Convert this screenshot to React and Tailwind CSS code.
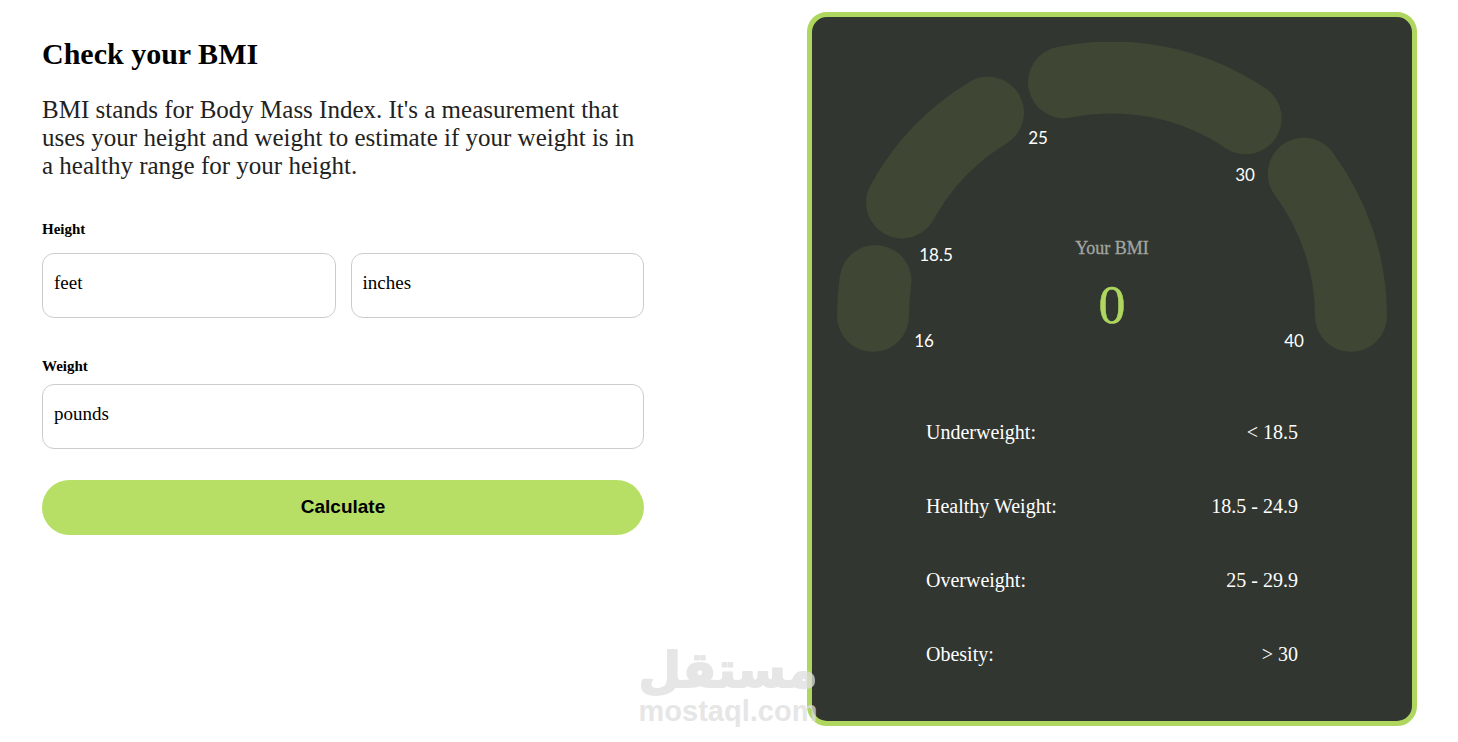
import { useState } from "react";

const ranges = [
  { label: "Underweight:", value: "< 18.5" },
  { label: "Healthy Weight:", value: "18.5 - 24.9" },
  { label: "Overweight:", value: "25 - 29.9" },
  { label: "Obesity:", value: "> 30" },
];

const arcs = [
  { from: 16, to: 18.5, d: "M36 274 A239 239 0 0 1 38.5 239" },
  { from: 18.5, to: 25, d: "M65 160.5 A239 239 0 0 1 151 70.7" },
  { from: 25, to: 30, d: "M227 40.3 A239 239 0 0 1 408.7 76.3" },
  { from: 30, to: Infinity, d: "M466.7 131.7 A239 239 0 0 1 514 274" },
];

const marks = [
  { x: 87, y: 305, text: "16" },
  { x: 99, y: 219, text: "18.5" },
  { x: 201, y: 102, text: "25" },
  { x: 408, y: 139, text: "30" },
  { x: 457, y: 305, text: "40" },
];

const inputClass =
  "w-full min-w-0 h-[65px] rounded-xl border border-[#ccc] bg-white px-[11px] pb-1.5 text-[19px] text-black placeholder:text-black placeholder:opacity-100 focus:outline-none focus:border-[#afd65f]";

const Gauge = ({ bmi }) => (
  <svg viewBox="0 0 550 328" className="w-full" role="img" aria-label="BMI gauge">
    {arcs.map((arc) => (
      <path
        key={arc.from}
        d={arc.d}
        fill="none"
        strokeWidth="72"
        strokeLinecap="round"
        className={
          bmi >= arc.from && bmi < arc.to ? "stroke-[#b7df65]" : "stroke-[#3f4634]"
        }
      />
    ))}
    {marks.map((mark) => (
      <text
        key={mark.text}
        x={mark.x}
        y={mark.y}
        textAnchor="middle"
        className="fill-white font-['Lato',sans-serif] text-[17px]"
      >
        {mark.text}
      </text>
    ))}
    <text
      x="275"
      y="212"
      textAnchor="middle"
      className="fill-[#a3a5a2] stroke-[#a3a5a2] stroke-[0.3px] font-['Liberation_Serif',serif] text-[18px]"
    >
      Your BMI
    </text>
    <text
      x="275"
      y="281"
      textAnchor="middle"
      className="fill-[#afd65f] stroke-[#afd65f] stroke-[0.5px] font-['Liberation_Serif',serif] text-[54px]"
    >
      {bmi}
    </text>
  </svg>
);

const Watermark = () => (
  <svg
    viewBox="0 0 180 100"
    className="pointer-events-none absolute bottom-0 left-[639px] w-[180px] overflow-visible fill-[#dedede] stroke-[#dedede] opacity-75"
    role="img"
    aria-label="mostaql.com"
  >
    <text
      x="89"
      y="45"
      textAnchor="middle"
      strokeWidth="2"
      strokeLinejoin="round"
      className="font-['DejaVu_Sans',sans-serif] text-[49px] font-bold"
    >
      مستقل
    </text>
    <text
      x="89"
      y="79"
      textAnchor="middle"
      stroke="none"
      className="font-['Liberation_Sans',sans-serif] text-[29px] font-bold"
    >
      mostaql.com
    </text>
  </svg>
);

const App = () => {
  const [feet, setFeet] = useState("");
  const [inches, setInches] = useState("");
  const [pounds, setPounds] = useState("");
  const [bmi, setBmi] = useState(0);

  const handleSubmit = (e) => {
    e.preventDefault();
    const height = Number(feet) * 12 + Number(inches);
    const weight = Number(pounds);
    if (!height || !weight) {
      setBmi(0);
      return;
    }
    // Imperial formula: 703 * lb / in^2
    setBmi(Math.round((703 * weight * 10) / (height * height)) / 10);
  };

  return (
    <main className="relative flex min-h-screen items-start justify-between bg-white pt-3 pr-[41px] pb-4 pl-[42px] font-['Liberation_Serif',serif] text-black">
      <section className="w-[44%] max-w-[602px] pt-6">
        <h1 className="text-[30px] leading-9 font-bold">Check your BMI</h1>
        <p className="mt-6 text-[25px] leading-7 text-[#222]">
          BMI stands for Body Mass Index. It's a measurement that uses your
          height and weight to estimate if your weight is in a healthy range for
          your height.
        </p>

        <form onSubmit={handleSubmit} className="mt-[39px]">
          <fieldset>
            <legend className="text-[15px] leading-5 font-bold">Height</legend>
            <div className="mt-3.5 flex gap-[15px]">
              <input
                className={inputClass}
                type="text"
                inputMode="numeric"
                placeholder="feet"
                aria-label="Height, feet"
                value={feet}
                onChange={(e) => setFeet(e.target.value)}
              />
              <input
                className={inputClass}
                type="text"
                inputMode="numeric"
                placeholder="inches"
                aria-label="Height, inches"
                value={inches}
                onChange={(e) => setInches(e.target.value)}
              />
            </div>
          </fieldset>

          <label
            htmlFor="weight"
            className="mt-[38px] mb-2 block text-[15px] leading-5 font-bold"
          >
            Weight
          </label>
          <input
            id="weight"
            className={inputClass}
            type="text"
            inputMode="numeric"
            placeholder="pounds"
            value={pounds}
            onChange={(e) => setPounds(e.target.value)}
          />

          <button
            type="submit"
            className="mt-[31px] h-[55px] w-full cursor-pointer rounded-full bg-[#b7df65] font-['Liberation_Sans',sans-serif] text-[19px] font-bold"
          >
            Calculate
          </button>
        </form>
      </section>

      <section className="w-[45%] max-w-[610px] rounded-[20px] border-5 border-[#afd65f] bg-[#313630] px-[25px] pt-[25px] pb-[30px] text-white">
        <Gauge bmi={bmi} />
        <table className="mx-auto mt-[25px] w-[372px] max-w-full text-[20px] leading-[22px]">
          <tbody>
            {ranges.map((range) => (
              <tr key={range.label} className="h-[74px]">
                <th scope="row" className="text-left font-normal">
                  {range.label}
                </th>
                <td className="text-right">{range.value}</td>
              </tr>
            ))}
          </tbody>
        </table>
      </section>

      <Watermark />
    </main>
  );
};

export default App;
